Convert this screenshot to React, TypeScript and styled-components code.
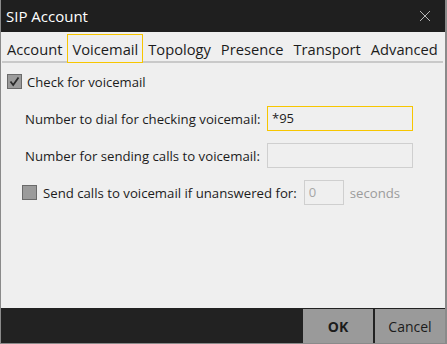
import React from "react";
import styled, { createGlobalStyle } from "styled-components";

const Global = createGlobalStyle`
  html, body { margin: 0; padding: 0; background: #efefef; }
  * { box-sizing: border-box; }
  body { font-family: "Open Sans", "Noto Sans", sans-serif; }
`;

const Frame = styled.div`
  width: 447px;
  height: 344px;
  display: flex;
  flex-direction: column;
  border-left: 1px solid #8a8a8a;
  border-right: 2px solid #8a8a8a;
  border-bottom: 1px solid #8a8a8a;
  background: #efefef;
  overflow: hidden;
`;

const TitleBar = styled.div`
  height: 32px;
  flex: none;
  background: #1f1f1f;
  display: flex;
  align-items: center;
  justify-content: space-between;
  padding: 0 14px 0 5px;
`;

const Title = styled.span`
  color: #ffffff;
  font-size: 15px;
  line-height: 20px;
  margin-top: -1px;
`;

const CloseButton = styled.span`
  display: flex;
  width: 12px;
  height: 12px;
  margin-top: -1px;
`;

const Body = styled.div`
  flex: 1;
  display: flex;
  flex-direction: column;
  align-items: flex-start;
  background: #efefef;
`;

const TabStrip = styled.div`
  display: flex;
  margin: 2px 0 0 1px;
  border-bottom: 2px solid #c9c9c9;
  height: 29px;
`;

const Tab = styled.div<{ $active?: boolean }>`
  height: 29px;
  margin-bottom: -2px;
  padding: 1px 4px 0 4px;
  border: 1px solid ${(p) => (p.$active ? "#f7c600" : "transparent")};
  background: ${(p) => (p.$active ? "#efefef" : "transparent")};
  position: relative;
  font-size: 14.7px;
  line-height: 26px;
  color: #1c1c1c;
  white-space: nowrap;
`;

const Content = styled.div`
  padding: 11px 0 0 6px;
  display: flex;
  flex-direction: column;
  width: 100%;
`;

const CheckRow = styled.label`
  display: flex;
  align-items: center;
  gap: 5px;
  height: 15px;
  font-size: 13.1px;
  color: #1c1c1c;
`;

const Box = styled.span`
  width: 15px;
  height: 15px;
  flex: none;
  background: #9b9b9b;
  border: 1px solid #6a6a6a;
  display: flex;
  align-items: center;
  justify-content: center;
`;

const Indented = styled.div`
  margin-top: 17px;
  padding-left: 15px;
  display: flex;
  flex-direction: column;
  gap: 12px;
`;

const FieldRow = styled.div`
  display: grid;
  grid-template-columns: 245px 146px;
  align-items: center;
  height: 25px;
`;

const Label = styled.span<{ $muted?: boolean }>`
  font-size: 13.2px;
  color: ${(p) => (p.$muted ? "#9c9c9c" : "#1c1c1c")};
  white-space: nowrap;
`;

const FieldLabel = styled(Label)`
  padding-left: 3px;
`;

const Input = styled.div<{ $focused?: boolean; $w?: number }>`
  height: 25px;
  width: ${(p) => p.$w ?? 146}px;
  border: 1px solid ${(p) => (p.$focused ? "#f7c600" : "#cfcfcf")};
  background: #efefef;
  font-size: 13px;
  line-height: 23px;
  padding-left: 4px;
  color: #1c1c1c;
`;

const MutedInput = styled(Input)`
  color: #a6a6a6;
`;

const TimeoutRow = styled.div`
  display: flex;
  align-items: center;
  height: 25px;
`;

const TimeoutCheck = styled.label`
  display: flex;
  align-items: center;
  gap: 6px;
  margin-right: 7px;
`;

const Seconds = styled(Label)`
  margin-left: 6px;
`;

const Footer = styled.div`
  height: 35px;
  flex: none;
  background: #222222;
  display: flex;
  justify-content: flex-end;
  padding-top: 1px;
  gap: 2px;
`;

const Button = styled.button<{ $primary?: boolean }>`
  width: 70px;
  height: 34px;
  border: none;
  background: #9a9a9a;
  font-family: "Open Sans", "Noto Sans", sans-serif;
  font-size: 14px;
  font-weight: ${(p) => (p.$primary ? 700 : 400)};
  color: #1c1c1c;
  padding: 0;
`;

export default function App() {
  return (
    <>
      <Global />
      <Frame>
        <TitleBar>
          <Title>SIP Account</Title>
          <CloseButton>
            <svg width="12" height="12" viewBox="0 0 12 12">
              <path d="M1 1 L11 11 M11 1 L1 11" stroke="#b5b5b5" strokeWidth="1" />
            </svg>
          </CloseButton>
        </TitleBar>
        <Body>
          <TabStrip>
            <Tab>Account</Tab>
            <Tab $active>Voicemail</Tab>
            <Tab>Topology</Tab>
            <Tab>Presence</Tab>
            <Tab>Transport</Tab>
            <Tab>Advanced</Tab>
          </TabStrip>
          <Content>
            <CheckRow>
              <Box>
                <svg width="13" height="13" viewBox="0 0 13 13">
                  <path d="M2.5 6.5 L5.2 10 L10.5 2.5" stroke="#2a2a2a" strokeWidth="1.8" fill="none" />
                </svg>
              </Box>
              Check for voicemail
            </CheckRow>
            <Indented>
              <FieldRow>
                <FieldLabel>Number to dial for checking voicemail:</FieldLabel>
                <Input $focused>*95</Input>
              </FieldRow>
              <FieldRow>
                <FieldLabel>Number for sending calls to voicemail:</FieldLabel>
                <Input />
              </FieldRow>
              <TimeoutRow>
                <TimeoutCheck>
                  <Box />
                  <Label>Send calls to voicemail if unanswered for:</Label>
                </TimeoutCheck>
                <MutedInput $w={40}>0</MutedInput>
                <Seconds $muted>seconds</Seconds>
              </TimeoutRow>
            </Indented>
          </Content>
        </Body>
        <Footer>
          <Button $primary>OK</Button>
          <Button>Cancel</Button>
        </Footer>
      </Frame>
    </>
  );
}
